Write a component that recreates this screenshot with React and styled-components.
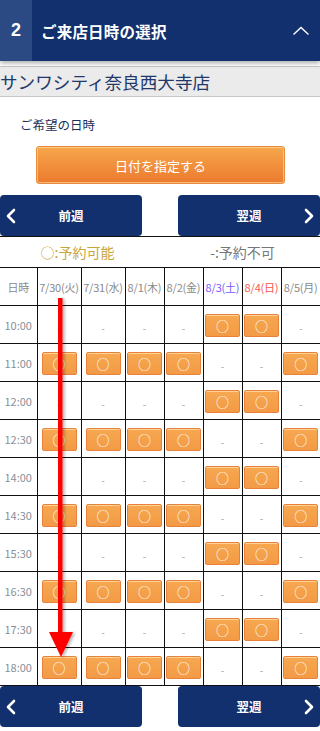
import styled, { createGlobalStyle } from "styled-components";

const GlobalStyle = createGlobalStyle`
  body {
    margin: 0;
    background: #ffffff;
    font-family: "Noto Sans CJK JP", "Noto Sans", sans-serif;
  }
`;

// 日付の見出し
const days = [
  { label: "7/30(火)", kind: "week" },
  { label: "7/31(水)", kind: "week" },
  { label: "8/1(木)", kind: "week" },
  { label: "8/2(金)", kind: "week" },
  { label: "8/3(土)", kind: "sat" },
  { label: "8/4(日)", kind: "sun" },
  { label: "8/5(月)", kind: "week" },
];

const weekdayOpen = [1, 1, 1, 1, 0, 0, 1];
const weekendOpen = [0, 0, 0, 0, 1, 1, 0];

const rows = [
  { time: "10:00", slots: weekendOpen },
  { time: "11:00", slots: weekdayOpen },
  { time: "12:00", slots: weekendOpen },
  { time: "12:30", slots: weekdayOpen },
  { time: "14:00", slots: weekendOpen },
  { time: "14:30", slots: weekdayOpen },
  { time: "15:30", slots: weekendOpen },
  { time: "16:30", slots: weekdayOpen },
  { time: "17:30", slots: weekendOpen },
  { time: "18:00", slots: weekdayOpen },
];

const colWidths = [37, 44, 44, 39, 39, 39, 39, 39];

function LeftArrow() {
  return (
    <svg width="12" height="16" viewBox="0 0 12 16">
      <path d="M9 2 L3 8 L9 14" fill="none" stroke="#fff" strokeWidth="2.6" strokeLinecap="round" strokeLinejoin="round" />
    </svg>
  );
}

function RightArrow() {
  return (
    <svg width="12" height="16" viewBox="0 0 12 16">
      <path d="M3 2 L9 8 L3 14" fill="none" stroke="#fff" strokeWidth="2.6" strokeLinecap="round" strokeLinejoin="round" />
    </svg>
  );
}

function WeekNav(props) {
  return (
    <StWeekNav $gap={props.gap}>
      <StWeekButton type="button">
        <StArrowLeft>
          <LeftArrow />
        </StArrowLeft>
        前週
      </StWeekButton>
      <StWeekButton type="button">
        翌週
        <StArrowRight>
          <RightArrow />
        </StArrowRight>
      </StWeekButton>
    </StWeekNav>
  );
}

export default function App() {
  return (
    <StPage>
      <GlobalStyle />
      <StHeader>
        <StStep>2</StStep>
        <StTitle>ご来店日時の選択</StTitle>
        <svg width="18" height="10" viewBox="0 0 18 10">
          <path d="M1.5 8.5 L9 1.5 L16.5 8.5" fill="none" stroke="#fff" strokeWidth="1.4" />
        </svg>
      </StHeader>

      <StStore>サンワシティ奈良西大寺店</StStore>
      <StLabel>ご希望の日時</StLabel>
      <StDateButton type="button">日付を指定する</StDateButton>

      <WeekNav gap={11} />

      <StLegend>
        <StLegendItem $ok>○:予約可能</StLegendItem>
        <StLegendItem>-:予約不可</StLegendItem>
      </StLegend>

      <StTable>
        <colgroup>
          {colWidths.map((w, i) => (
            <col key={i} style={{ width: w }} />
          ))}
        </colgroup>
        <thead>
          <tr>
            <StHeadCell>日時</StHeadCell>
            {days.map((d) => (
              <StHeadCell key={d.label} $kind={d.kind}>
                {d.label}
              </StHeadCell>
            ))}
          </tr>
        </thead>
        <tbody>
          {rows.map((r) => (
            <tr key={r.time}>
              <StTimeCell>{r.time}</StTimeCell>
              {r.slots.map((s, i) => (
                <StCell key={i}>
                  {s ? <StSlot type="button">○</StSlot> : <StDash>-</StDash>}
                </StCell>
              ))}
            </tr>
          ))}
        </tbody>
      </StTable>

      <WeekNav gap={0} />

      {/* 赤い矢印（注釈） */}
      <StOverlay width="320" height="731" viewBox="0 0 320 731">
        <defs>
          <filter id="sh" x="-50%" y="-10%" width="200%" height="120%">
            <feDropShadow dx="2" dy="1" stdDeviation="1.5" floodColor="#000" floodOpacity="0.3" />
          </filter>
        </defs>
        <g filter="url(#sh)">
          <rect x="58" y="298" width="4.5" height="336" fill="#ff0000" />
          <path d="M49 632 L73 632 L61 657 Z" fill="#ff0000" />
        </g>
      </StOverlay>
    </StPage>
  );
}

const StPage = styled.div`
  position: relative;
  width: 320px;
  height: 731px;
  overflow: hidden;
`;

const StHeader = styled.header`
  display: flex;
  align-items: center;
  height: 61px;
  background-color: #11306d;
  padding-right: 10px;
  box-shadow: 0 2px 5px rgba(0, 0, 0, 0.35);
  position: relative;
  z-index: 1;
`;

const StStep = styled.div`
  width: 32px;
  height: 100%;
  display: flex;
  align-items: center;
  justify-content: center;
  background-color: #2b4a83;
  color: #ffffff;
  font-family: "Liberation Sans", Arial, sans-serif;
  font-weight: bold;
  font-size: 18px;
`;

const StTitle = styled.h2`
  flex: 1;
  margin: 0 0 0 9px;
  color: #ffffff;
  font-size: 15.5px;
  font-weight: bold;
  letter-spacing: 0.2px;
`;

const StStore = styled.div`
  margin-top: 5px;
  height: 29px;
  line-height: 29px;
  background-color: #ebebeb;
  border-top: 1px solid #c8c8c8;
  border-bottom: 1px solid #c8c8c8;
  color: #22386b;
  font-size: 17.6px;
  white-space: nowrap;
`;

const StLabel = styled.div`
  margin: 20px 0 0 20px;
  height: 16px;
  line-height: 16px;
  color: #1c2e58;
  font-size: 12.5px;
`;

const StDateButton = styled.button`
  display: block;
  margin: 13px 0 0 36px;
  width: 249px;
  height: 38px;
  border: 1px solid #e98a3a;
  border-radius: 3px;
  background: linear-gradient(#f6a74c, #ec7a2e);
  box-shadow: inset 0 0 0 1px rgba(255, 225, 180, 0.6);
  color: #ffffff;
  font-family: "Noto Sans CJK JP", sans-serif;
  font-size: 13px;
  cursor: pointer;
`;

const StWeekNav = styled.div`
  display: flex;
  justify-content: space-between;
  margin-top: ${(p) => p.$gap}px;
`;

const StWeekButton = styled.button`
  position: relative;
  width: 142px;
  height: 41px;
  border: none;
  border-radius: 4px;
  background-color: #11306d;
  color: #ffffff;
  font-family: "Noto Sans CJK JP", sans-serif;
  font-size: 12.5px;
  font-weight: bold;
  cursor: pointer;
`;

const StArrowLeft = styled.span`
  position: absolute;
  left: 5px;
  top: 13px;
  display: flex;
`;

const StArrowRight = styled.span`
  position: absolute;
  right: 5px;
  top: 13px;
  display: flex;
`;

const StLegend = styled.div`
  display: flex;
  height: 30px;
  align-items: center;
  border-top: 1px solid #111;
`;

const StLegendItem = styled.div`
  flex: 1;
  text-align: center;
  font-size: 14px;
  color: ${(p) => (p.$ok ? "#c9a63c" : "#777777")};
  padding-left: ${(p) => (p.$ok ? "0" : "10px")};
`;

const StTable = styled.table`
  width: 320px;
  table-layout: fixed;
  border-collapse: collapse;
  border-top: 1px solid #111;
  border-bottom: 1px solid #111;
`;

const dayColor = { week: "#8a8a8a", sat: "#7a5cf5", sun: "#f25a50" };

const StHeadCell = styled.th`
  height: 37px;
  padding: 0;
  border: 1px solid #111;
  border-top: none;
  font-weight: normal;
  font-size: 11px;
  white-space: nowrap;
  overflow: visible;
  color: ${(p) => dayColor[p.$kind] || "#8a8a8a"};
  letter-spacing: -0.2px;

  &:first-child {
    border-left: none;
  }
  &:last-child {
    border-right: none;
  }
`;

const StTimeCell = styled.td`
  height: 37px;
  padding: 0;
  border: 1px solid #111;
  border-left: none;
  text-align: center;
  font-size: 11px;
  color: #8a9099;
`;

const StCell = styled.td`
  height: 37px;
  padding: 0;
  border: 1px solid #111;
  text-align: center;
  vertical-align: middle;

  &:last-child {
    border-right: none;
  }
`;

const StSlot = styled.button`
  width: 35px;
  height: 23px;
  padding: 0;
  border: 1px solid #e8823a;
  border-radius: 2px;
  background: linear-gradient(#f6a850, #f39a45);
  box-shadow: inset 0 1px 0 rgba(255, 220, 170, 0.8);
  color: #ffffff;
  font-family: "Noto Sans CJK JP", sans-serif;
  font-size: 13px;
  line-height: 20px;
  cursor: pointer;
`;

const StDash = styled.span`
  color: #9aa4b0;
  font-size: 10px;
`;

const StOverlay = styled.svg`
  position: absolute;
  left: 0;
  top: 0;
  pointer-events: none;
`;
